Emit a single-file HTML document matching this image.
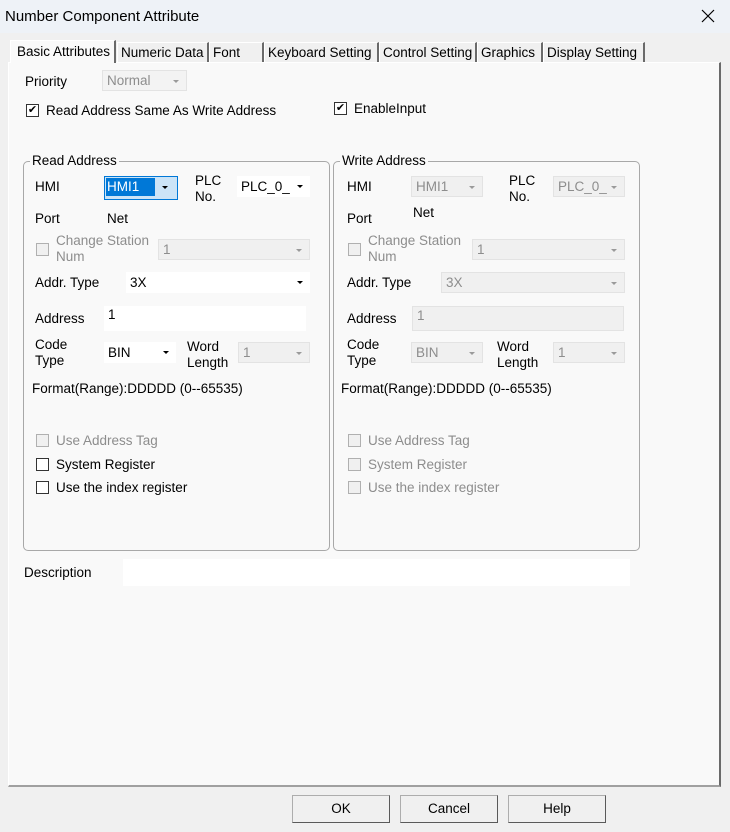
<!DOCTYPE html><html><head><style>
body{margin:0;width:730px;height:832px;background:#f0f0f0;font-family:"Liberation Sans",Arial,sans-serif;font-size:13.5px;color:#000;position:relative;overflow:hidden}
.a{position:absolute;white-space:nowrap}
.g{color:#8d8d8d}
.title{left:0;top:0;width:730px;height:33px;background:#eef2f7}
.panel{left:8px;top:62px;width:710px;height:722px;background:#f9f9f9;border-right:2px solid #6a6a6a;border-bottom:2px solid #a0a0a0;border-left:1px solid #fff;border-top:1px solid #fff}
.tab{top:42px;height:20px;background:#f0f0f0;border-right:2px solid #6a6a6a;border-left:1px solid #fff;border-top:1px solid #fff;padding:0 0 0 3px;line-height:20px;box-sizing:border-box;overflow:hidden}
.box{border:1px solid #a8a8a8;border-radius:5px}
.in{background:#fff;height:21px;line-height:21px;padding-left:4px;box-sizing:border-box}
.dis{background:#f0f0f0;border:1px solid #e3e3e3;color:#8d8d8d;height:21px;line-height:19px;padding-left:4px;box-sizing:border-box}
.ar{position:absolute;right:7px;top:9px;width:0;height:0;border-left:3px solid transparent;border-right:3px solid transparent;border-top:3px solid #000}
.dis .ar{border-top-color:#9a9a9a}
.cb{width:11px;height:11px;border:1px solid #333;background:#fff;box-sizing:content-box}
.cbd{width:11px;height:11px;border:1px solid #b0b0b0;background:#f0f0f0}
.btn{top:795px;width:96px;height:26px;border:1px solid #adadad;border-right-color:#5a5a5a;border-bottom-color:#5a5a5a;background:#f0f0f0;text-align:center;line-height:26px}
</style></head><body>
<div class="a title"></div>
<div class="a" style="left:5px;top:8px;font-size:15px">Number Component Attribute</div>
<svg class="a" style="left:701px;top:9px" width="14" height="14"><path d="M1 1L13 13M13 1L1 13" stroke="#000" stroke-width="1.2"/></svg>
<div class="a panel"></div>
<div class="a tab" style="left:10px;top:40px;height:23px;width:106px;background:#f9f9f9;border-bottom:none;z-index:2;padding-left:6px;line-height:22px">Basic Attributes</div>
<div class="a tab" style="left:117px;width:92px">Numeric Data</div>
<div class="a tab" style="left:209px;width:55px">Font</div>
<div class="a tab" style="left:264px;width:115px">Keyboard Setting</div>
<div class="a tab" style="left:379px;width:98px">Control Setting</div>
<div class="a tab" style="left:477px;width:66px">Graphics</div>
<div class="a tab" style="left:543px;width:102px">Display Setting</div>

<div class="a" style="left:25px;top:74px">Priority</div>
<div class="a dis" style="left:102px;top:70px;width:85px;background:#f3f3f3">Normal<span class="ar"></span></div>
<div class="a cb" style="left:26px;top:104px;font-size:11px;line-height:11px;text-align:center">✔</div>
<div class="a" style="left:46px;top:103px">Read Address Same As Write Address</div>
<div class="a cb" style="left:334px;top:102px;font-size:11px;line-height:11px;text-align:center">✔</div>
<div class="a" style="left:354px;top:101px">EnableInput</div>

<div class="a box" style="left:23px;top:161px;width:305px;height:388px"></div>
<div class="a" style="left:30px;top:153px;background:#f9f9f9;padding:0 2px">Read Address</div>
<div class="a" style="left:35px;top:179px">HMI</div>
<div class="a" style="left:104px;top:176px;width:72px;height:22px;border:1px solid #0078d7;background:#cce4f7"></div>
<div class="a" style="left:106px;top:178px;width:48px;height:18px;background:#0078d7;color:#fff;line-height:18px;padding-left:1px">HMI1</div>
<div class="ar" style="left:162px;top:186px"></div>
<div class="a" style="left:195px;top:173px;line-height:16px">PLC<br>No.</div>
<div class="a in" style="left:237px;top:176px;width:73px">PLC_0_<span class="ar"></span></div>
<div class="a" style="left:35px;top:211px">Port</div>
<div class="a" style="left:107px;top:211px">Net</div>
<div class="a cbd" style="left:36px;top:243px"></div>
<div class="a g" style="left:56px;top:233px;line-height:16px">Change Station<br>Num</div>
<div class="a dis" style="left:158px;top:239px;width:152px">1<span class="ar"></span></div>
<div class="a" style="left:35px;top:275px">Addr. Type</div>
<div class="a in" style="left:126px;top:272px;width:184px">3X<span class="ar"></span></div>
<div class="a" style="left:35px;top:311px">Address</div>
<div class="a in" style="left:104px;top:306px;width:202px;height:25px;line-height:18px">1</div>
<div class="a" style="left:35px;top:337px;line-height:16px">Code<br>Type</div>
<div class="a in" style="left:104px;top:342px;width:72px">BIN<span class="ar"></span></div>
<div class="a" style="left:187px;top:339px;line-height:16px">Word<br>Length</div>
<div class="a dis" style="left:238px;top:342px;width:72px">1<span class="ar"></span></div>
<div class="a" style="left:32px;top:381px">Format(Range):DDDDD (0--65535)</div>
<div class="a cbd" style="left:36px;top:434px"></div><div class="a g" style="left:56px;top:433px">Use Address Tag</div>
<div class="a cb" style="left:36px;top:458px"></div><div class="a" style="left:56px;top:457px">System Register</div>
<div class="a cb" style="left:36px;top:481px"></div><div class="a" style="left:56px;top:480px">Use the index register</div>

<div class="a box" style="left:333px;top:161px;width:305px;height:388px"></div>
<div class="a" style="left:340px;top:153px;background:#f9f9f9;padding:0 2px">Write Address</div>
<div class="a" style="left:347px;top:179px">HMI</div>
<div class="a dis" style="left:411px;top:176px;width:72px">HMI1<span class="ar"></span></div>
<div class="a" style="left:509px;top:173px;line-height:16px">PLC<br>No.</div>
<div class="a dis" style="left:553px;top:176px;width:72px">PLC_0_<span class="ar"></span></div>
<div class="a" style="left:347px;top:211px">Port</div>
<div class="a" style="left:413px;top:205px">Net</div>
<div class="a cbd" style="left:348px;top:243px"></div>
<div class="a g" style="left:368px;top:233px;line-height:16px">Change Station<br>Num</div>
<div class="a dis" style="left:472px;top:239px;width:153px">1<span class="ar"></span></div>
<div class="a" style="left:347px;top:275px">Addr. Type</div>
<div class="a dis" style="left:441px;top:272px;width:184px">3X<span class="ar"></span></div>
<div class="a" style="left:347px;top:311px">Address</div>
<div class="a dis" style="left:412px;top:306px;width:212px;height:25px;line-height:18px">1</div>
<div class="a" style="left:347px;top:337px;line-height:16px">Code<br>Type</div>
<div class="a dis" style="left:411px;top:342px;width:72px">BIN<span class="ar"></span></div>
<div class="a" style="left:497px;top:339px;line-height:16px">Word<br>Length</div>
<div class="a dis" style="left:553px;top:342px;width:72px">1<span class="ar"></span></div>
<div class="a" style="left:341px;top:381px">Format(Range):DDDDD (0--65535)</div>
<div class="a cbd" style="left:348px;top:434px"></div><div class="a g" style="left:368px;top:433px">Use Address Tag</div>
<div class="a cbd" style="left:348px;top:458px"></div><div class="a g" style="left:368px;top:457px">System Register</div>
<div class="a cbd" style="left:348px;top:481px"></div><div class="a g" style="left:368px;top:480px">Use the index register</div>

<div class="a" style="left:24px;top:565px">Description</div>
<div class="a" style="left:123px;top:559px;width:507px;height:27px;background:#fff"></div>

<div class="a btn" style="left:292px">OK</div>
<div class="a btn" style="left:400px">Cancel</div>
<div class="a btn" style="left:508px">Help</div>
</body></html>
